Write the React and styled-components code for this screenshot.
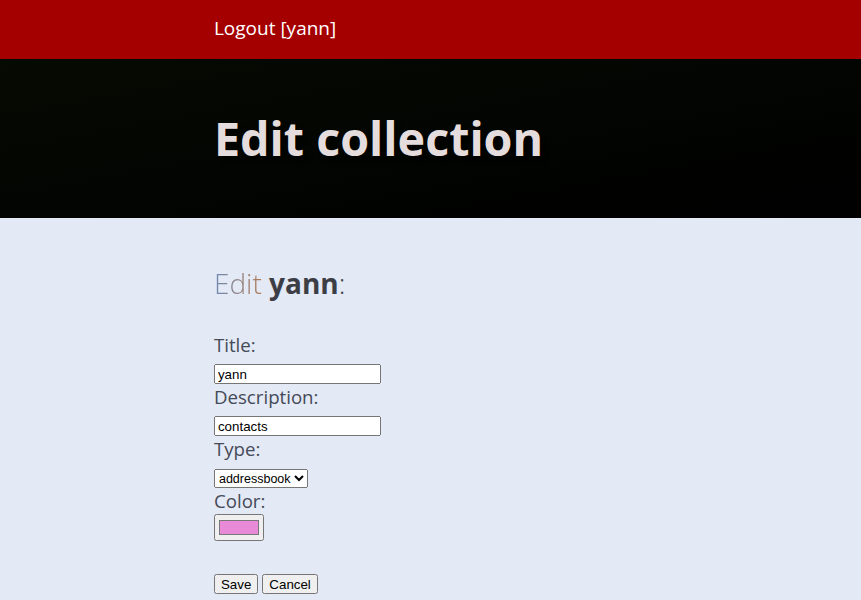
import styled, { createGlobalStyle } from "styled-components";

const GlobalStyle = createGlobalStyle`
  html, body {
    margin: 0;
    padding: 0;
  }
  body {
    background: #e3e9f5;
    color: #424247;
    font-family: "Open Sans", "Noto Sans", sans-serif;
    font-size: 18.67px;
    min-height: 100vh;
  }
`;

// 상단 빨간 메뉴
const Nav = styled.nav`
  background: #a40000;
  color: #fff;
  padding: 0 24.85%;
  height: 59px;
  display: flex;
  align-items: center;
`;

const NavLink = styled.a`
  color: inherit;
  text-decoration: none;
  font-size: 19px;
  line-height: 26px;
  padding-bottom: 4px;
`;

const Header = styled.h1`
  margin: 0;
  background: linear-gradient(to bottom right, #050a02, #000);
  color: #e5dddd;
  font-size: 46.67px;
  font-weight: 700;
  line-height: 63px;
  padding: 48px 24.85%;
  text-shadow: 0.1em 0.1em 0.1em rgba(0, 0, 0, 0.5);
`;

const Section = styled.section`
  padding: 0 24.85% 2em;
`;

const Subtitle = styled.h2`
  margin: 46px 0 29px;
  font-size: 28px;
  line-height: 39px;
  font-weight: 300;
  color: #424247;
`;

// 얇은 글씨에 색 번짐처럼 보이는 그라데이션
const Light = styled.span`
  font-weight: 300;
  background: linear-gradient(to right, #6f8ab4, #b07a55);
  -webkit-background-clip: text;
  background-clip: text;
  color: transparent;
`;

const Strong = styled.span`
  font-weight: 700;
  color: #3d3e45;
`;

const Form = styled.form`
  display: flex;
  flex-direction: column;
  align-items: flex-start;
`;

const Label = styled.label`
  display: block;
  font-size: 18.67px;
  line-height: 26px;
  color: #454a58;
`;

const TextInput = styled.input`
  margin: 6px 0 0;
  width: 167px;
  height: 20px;
  box-sizing: border-box;
  font-family: "Liberation Sans", Arial, sans-serif;
  font-size: 13.33px;
  padding: 1px 2px;
`;

const Select = styled.select`
  margin: 7px 0 0;
  height: 19px;
  box-sizing: border-box;
  font-family: "Liberation Sans", Arial, sans-serif;
  font-size: 12.5px;
`;

const ColorInput = styled.input`
  margin: 0;
  width: 50px;
  height: 27px;
`;

const Buttons = styled.div`
  display: flex;
  gap: 4px;
  margin-top: 33px;
`;

const Button = styled.button`
  font-family: "Liberation Sans", Arial, sans-serif;
  font-size: 13.33px;
  height: 20px;
  padding: 1px 5px;
`;

export default function App() {
  return (
    <>
      <GlobalStyle />
      <Nav>
        <NavLink href="#">Logout [yann]</NavLink>
      </Nav>
      <Header>Edit collection</Header>
      <Section>
        <Subtitle>
          <Light>Edit</Light> <Strong>yann</Strong>:
        </Subtitle>
        <Form onSubmit={(e) => e.preventDefault()}>
          <Label>Title:</Label>
          <TextInput type="text" defaultValue="yann" />
          <Label>Description:</Label>
          <TextInput type="text" defaultValue="contacts" />
          <Label>Type:</Label>
          <Select defaultValue="addressbook">
            <option value="addressbook">addressbook</option>
            <option value="calendar">calendar</option>
          </Select>
          <Label>Color:</Label>
          <ColorInput type="color" defaultValue="#e98ad9" />
          <Buttons>
            <Button type="submit">Save</Button>
            <Button type="button">Cancel</Button>
          </Buttons>
        </Form>
      </Section>
    </>
  );
}
